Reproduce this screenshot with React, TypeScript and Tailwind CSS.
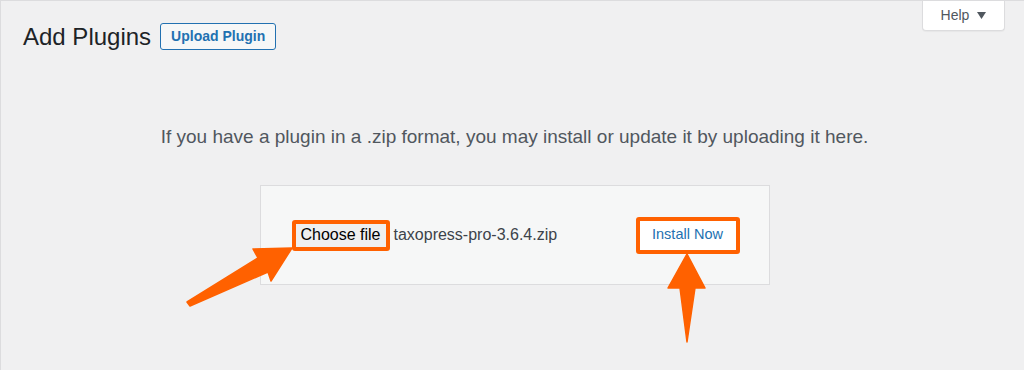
export default function App() {
  return (
    <div
      className="relative h-[370px] w-[1024px] overflow-hidden border-t border-l border-[#dcdcde] bg-[#f0f0f1]"
      style={{ fontFamily: '"Liberation Sans", Arial, sans-serif' }}
    >
      {/* Header */}
      <div className="flex items-start justify-between pl-[22px] pr-[19px]">
        <div className="flex items-center gap-[9px] pt-[20px]">
          <h1 className="text-[24px] leading-[31px] font-normal text-[#1d2327]">Add Plugins</h1>
          <button className="flex h-[27px] items-center rounded-[3px] border border-[#2271b1] bg-[#f6f7f7] px-[10px] text-[14px] font-semibold text-[#2271b1]">
            Upload Plugin
          </button>
        </div>
        <div className="flex h-[30px] w-[83px] items-center justify-center gap-[8px] rounded-b-[4px] border border-t-0 border-[#dcdcde] bg-white text-[14px] text-[#50575e] shadow-[0_1px_1px_rgba(0,0,0,0.04)]">
          <span>Help</span>
          <svg width="9" height="7" viewBox="0 0 9 7">
            <path d="M0 0 H9 L4.5 7 Z" fill="#50575e" />
          </svg>
        </div>
      </div>

      {/* Upload area */}
      <div className="pl-[23px] pr-[19px]">
        <p className="mt-[71px] text-center text-[19px] leading-[28px] text-[#50575e]">
          If you have a plugin in a .zip format, you may install or update it by uploading it here.
        </p>
        <div className="mx-auto mt-[34px] flex h-[100px] w-[510px] items-center justify-between border border-[#dcdcde] bg-[#f6f7f7] pl-[31px] pr-[29px]">
          <div className="flex items-center gap-[4px]">
            <div className="rounded-[3px] border-4 border-[#ff6100] bg-white">
              <div className="flex h-[23px] w-[90px] items-center justify-center bg-[#efefef] text-[16px] text-black">
                Choose file
              </div>
            </div>
            <span className="text-[16px] text-[#3c434a]">taxopress-pro-3.6.4.zip</span>
          </div>
          <div className="flex h-[37px] w-[104px] items-center justify-center rounded-[3px] border-4 border-[#ff6100] bg-white text-[14.5px] text-[#2271b1]">
            Install Now
          </div>
        </div>
      </div>

      {/* Annotation arrows */}
      <svg className="pointer-events-none absolute inset-0" width="1024" height="370" viewBox="0 0 1024 370">
        <polygon
          points="291,247 270,280 267,271 189,305 186,301 257,257 252,248"
          fill="#ff6100"
          stroke="#ff6100"
          strokeWidth="1.5"
          strokeLinejoin="round"
        />
        <polygon
          points="686,253 704,287 694,287 686,341 679,287 667,287"
          fill="#ff6100"
          stroke="#ff6100"
          strokeWidth="1.5"
          strokeLinejoin="round"
        />
      </svg>
    </div>
  );
}
